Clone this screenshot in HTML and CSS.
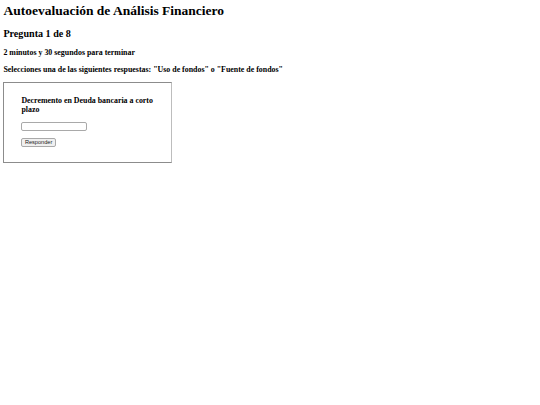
FILE: index.html
```html
<!DOCTYPE html>
<html lang="es">
<head>
<meta charset="utf-8">
<link rel="stylesheet" href="styles.css">
</head>
<body>
<h1 class="title">Autoevaluación de Análisis Financiero</h1>
<h2 class="counter">Pregunta 1 de 8</h2>
<h3 class="note">2 minutos y 30 segundos para terminar</h3>
<h3 class="note">Selecciones una de las siguientes respuestas: "Uso de fondos" o "Fuente de fondos"</h3>
<div class="box">
  <h3 class="question">Decremento en Deuda bancaria a corto plazo</h3>
  <input class="answer" type="text">
  <div class="actions"><button class="submit" type="button">Responder</button></div>
</div>
</body>
</html>
```
FILE: styles.css
```css
html { background: #fff; }
body { margin: 3.4px; font-family: "Liberation Serif", "Times New Roman", serif; color: #000; }
.title { font-size: 13.5px; margin: 0 0 0.67em; }
.counter { font-size: 10.125px; margin: 0.83em 0; }
.note { font-size: 7.9px; margin: 1em 0; }
.box {
  width: 133px;
  padding: 6px 17px 15px;
  border: 1px solid #8c8c8c;
  border-right-color: #bdbdbd;
}
.question { font-size: 7.9px; margin: 1em 0; }
.answer {
  display: block;
  box-sizing: border-box;
  width: 66px;
  height: 9px;
  margin: 0;
  padding: 0 1px;
  font-size: 5.6px;
  border: 1px solid #a9a9a9;
  border-radius: 2px;
  background: #fff;
}
.actions { display: flex; margin-top: 7px; }
.submit {
  box-sizing: border-box;
  height: 8.5px;
  margin: 0;
  padding: 0 2.5px;
  font-family: "Liberation Sans", Arial, sans-serif;
  font-size: 5.6px;
  line-height: 1;
  color: #222;
  background: #f0f0f0;
  border: 1px solid #a9a9a9;
  border-radius: 2px;
}
```
